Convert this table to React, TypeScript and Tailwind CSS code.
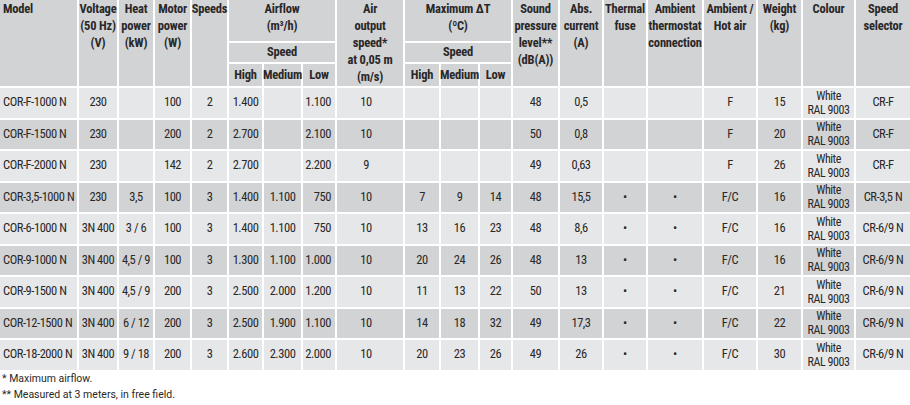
import React from "react"

type Align = "left" | "center" | "right"

const COLS: { align: Align; pad?: string }[] = [
  { align: "left", pad: "pl-[3px]" }, // model
  { align: "center" }, // voltage
  { align: "center" }, // heat
  { align: "center" }, // motor
  { align: "center" }, // speeds
  { align: "center" }, // airflow high
  { align: "center" }, // airflow medium
  { align: "right", pad: "pr-[4px]" }, // airflow low
  { align: "center", pad: "pr-[8px]" }, // air output
  { align: "center" }, // dT high
  { align: "center" }, // dT medium
  { align: "center" }, // dT low
  { align: "center" }, // sound
  { align: "center" }, // abs current
  { align: "center" }, // thermal fuse
  { align: "center" }, // ambient thermostat
  { align: "center" }, // ambient / hot air
  { align: "center" }, // weight
  { align: "center" }, // colour
  { align: "center" }, // speed selector
]

const ROWS: string[][] = [
  ["COR-F-1000 N", "230", "", "100", "2", "1.400", "", "1.100", "10", "", "", "", "48", "0,5", "", "", "F", "15", "CR-F"],
  ["COR-F-1500 N", "230", "", "200", "2", "2.700", "", "2.100", "10", "", "", "", "50", "0,8", "", "", "F", "20", "CR-F"],
  ["COR-F-2000 N", "230", "", "142", "2", "2.700", "", "2.200", "9", "", "", "", "49", "0,63", "", "", "F", "26", "CR-F"],
  ["COR-3,5-1000 N", "230", "3,5", "100", "3", "1.400", "1.100", "750", "10", "7", "9", "14", "48", "15,5", "•", "•", "F/C", "16", "CR-3,5 N"],
  ["COR-6-1000 N", "3N 400", "3 / 6", "100", "3", "1.400", "1.100", "750", "10", "13", "16", "23", "48", "8,6", "•", "•", "F/C", "16", "CR-6/9 N"],
  ["COR-9-1000 N", "3N 400", "4,5 / 9", "100", "3", "1.300", "1.100", "1.000", "10", "20", "24", "26", "48", "13", "•", "•", "F/C", "16", "CR-6/9 N"],
  ["COR-9-1500 N", "3N 400", "4,5 / 9", "200", "3", "2.500", "2.000", "1.200", "10", "11", "13", "22", "50", "13", "•", "•", "F/C", "21", "CR-6/9 N"],
  ["COR-12-1500 N", "3N 400", "6 / 12", "200", "3", "2.500", "1.900", "1.100", "10", "14", "18", "32", "49", "17,3", "•", "•", "F/C", "22", "CR-6/9 N"],
  ["COR-18-2000 N", "3N 400", "9 / 18", "200", "3", "2.600", "2.300", "2.000", "10", "20", "23", "26", "49", "26", "•", "•", "F/C", "30", "CR-6/9 N"],
]

// header cells that span all three header rows
function HeadCell({ lines, left }: { lines: string[]; left?: boolean }) {
  return (
    <div
      className={
        "row-span-3 bg-[#d1d3d4] flex flex-col leading-[17px] " +
        (left ? "items-start pl-[3px]" : "items-center text-center")
      }
    >
      {lines.map((l, i) => (
        <span key={i} className="whitespace-nowrap">{l}</span>
      ))}
    </div>
  )
}

function GroupCell({ lines }: { lines: string[] }) {
  return (
    <div className="col-span-3 bg-[#d1d3d4] flex flex-col items-center leading-[17px]">
      {lines.map((l, i) => (
        <span key={i}>{l}</span>
      ))}
    </div>
  )
}

function SubCell({ children, span }: { children: React.ReactNode; span?: boolean }) {
  return (
    <div className={(span ? "col-span-3 " : "") + "bg-[#d1d3d4] flex items-center justify-center"}>
      {children}
    </div>
  )
}

export default function App() {
  return (
    <div className="w-[910px] h-[405px] bg-white text-[#2a2728] font-[Roboto,sans-serif]">
      <div className="grid grid-cols-[77px_38px_34px_35px_35px_33px_37px_32px_66px_34px_37px_31px_45px_42px_42px_54px_52px_43px_51px_54px] grid-rows-[41px_19px_22px] auto-rows-[29.5px] gap-[2px] [font-stretch:condensed]">
        {/* header */}
        <div className="contents text-[12.5px] font-bold tracking-[-0.2px]">
          <HeadCell left lines={["Model"]} />
          <HeadCell lines={["Voltage", "(50 Hz)", "(V)"]} />
          <HeadCell lines={["Heat", "power", "(kW)"]} />
          <HeadCell lines={["Motor", "power", "(W)"]} />
          <HeadCell lines={["Speeds"]} />
          <GroupCell lines={["Airflow", "(m³/h)"]} />
          <HeadCell lines={["Air", "output", "speed*", "at 0,05 m", "(m/s)"]} />
          <GroupCell lines={["Maximum ΔT", "(ºC)"]} />
          <HeadCell lines={["Sound", "pressure", "level**", "(dB(A))"]} />
          <HeadCell lines={["Abs.", "current", "(A)"]} />
          <HeadCell lines={["Thermal", "fuse"]} />
          <HeadCell lines={["Ambient", "thermostat", "connection"]} />
          <HeadCell lines={["Ambient /", "Hot air"]} />
          <HeadCell lines={["Weight", "(kg)"]} />
          <HeadCell lines={["Colour"]} />
          <HeadCell lines={["Speed", "selector"]} />
          <SubCell span>Speed</SubCell>
          <SubCell span>Speed</SubCell>
          <SubCell>High</SubCell>
          <SubCell>Medium</SubCell>
          <SubCell>Low</SubCell>
          <SubCell>High</SubCell>
          <SubCell>Medium</SubCell>
          <SubCell>Low</SubCell>
        </div>

        {/* body */}
        {ROWS.map((row, r) => {
          const bg = r % 2 === 0 ? "bg-[#e6e7e8]" : "bg-[#d1d3d4]"
          const cells = [...row.slice(0, 18), "__colour", row[18]]
          return (
            <div key={r} className="contents text-[12.5px] tracking-[-0.45px]">
              {cells.map((v, c) => {
                const col = COLS[c]
                const justify =
                  col.align === "left" ? "justify-start" : col.align === "right" ? "justify-end" : "justify-center"
                if (v === "__colour") {
                  return (
                    <div key={c} className={bg + " flex flex-col items-center justify-center text-[12px] leading-[14px]"}>
                      <span>White</span>
                      <span>RAL 9003</span>
                    </div>
                  )
                }
                return (
                  <div key={c} className={`${bg} flex items-center whitespace-nowrap ${justify} ${col.pad ?? ""}`}>
                    {v}
                  </div>
                )
              })}
            </div>
          )
        })}
      </div>

      <div className="mt-[1px] pl-[2px] text-[10.5px] leading-[16px]">
        <div>* Maximum airflow.</div>
        <div>** Measured at 3 meters, in free field.</div>
      </div>
    </div>
  )
}
